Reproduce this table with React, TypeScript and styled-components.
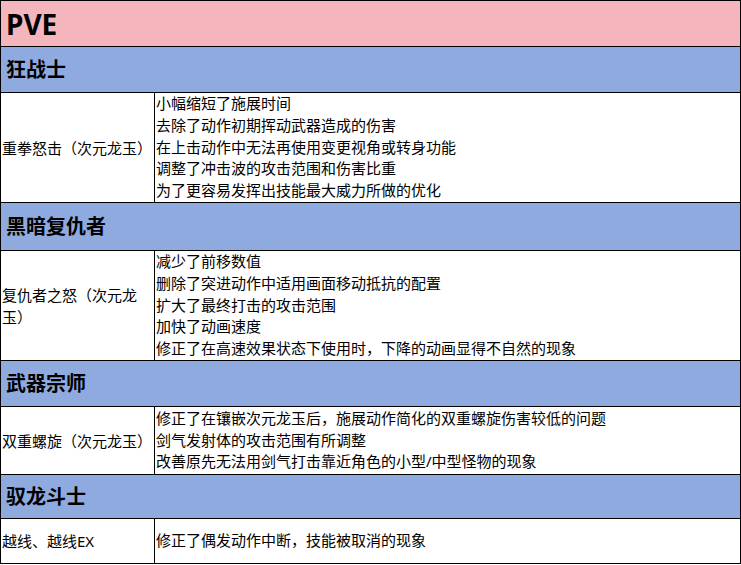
import React from 'react'
import styled, { createGlobalStyle } from 'styled-components'

const GlobalStyle = createGlobalStyle`
    html, body {
        margin: 0;
        padding: 0;
        background: #fff;
    }
    body {
        font-family: "Noto Sans", "Noto Sans CJK SC", sans-serif;
        color: #000;
    }
`

const Sheet = styled.div`
    width: 741px;
    box-sizing: border-box;
    border-top: 1px solid #000;
    border-left: 1px solid #000;
`

const Banner = styled.div<{ $h: number; $bg: string; $size: number }>`
    height: ${p => p.$h}px;
    background: ${p => p.$bg};
    border-right: 1px solid #000;
    border-bottom: 1px solid #000;
    display: flex;
    align-items: center;
    padding-left: 5px;
    font-family: "Noto Sans", "Noto Sans CJK SC", sans-serif;
    font-weight: 700;
    font-size: ${p => p.$size}px;
    line-height: 1;
`

const EntryRow = styled.div<{ $h: number }>`
    display: grid;
    grid-template-columns: 154px 1fr;
    height: ${p => p.$h}px;
    border-right: 1px solid #000;
    border-bottom: 1px solid #000;
    font-size: 15px;
`

const SkillCell = styled.div`
    border-right: 1px solid #000;
    display: flex;
    align-items: center;
    padding-left: 1px;
    line-height: 22px;
    word-break: break-all;
`

const NotesCell = styled.div`
    display: flex;
    flex-direction: column;
    justify-content: center;
    padding-left: 1px;
    line-height: 21.8px;
    white-space: nowrap;
`

interface Section {
    title: string
    headH: number
    skill: string
    rowH: number
    notes: string[]
}

const sections: Section[] = [
    {
        title: '狂战士',
        headH: 45,
        skill: '重拳怒击（次元龙玉）',
        rowH: 109,
        notes: [
            '小幅缩短了施展时间',
            '去除了动作初期挥动武器造成的伤害',
            '在上击动作中无法再使用变更视角或转身功能',
            '调整了冲击波的攻击范围和伤害比重',
            '为了更容易发挥出技能最大威力所做的优化',
        ],
    },
    {
        title: '黑暗复仇者',
        headH: 47,
        skill: '复仇者之怒（次元龙玉）',
        rowH: 109,
        notes: [
            '减少了前移数值',
            '删除了突进动作中适用画面移动抵抗的配置',
            '扩大了最终打击的攻击范围',
            '加快了动画速度',
            '修正了在高速效果状态下使用时，下降的动画显得不自然的现象',
        ],
    },
    {
        title: '武器宗师',
        headH: 45,
        skill: '双重螺旋（次元龙玉）',
        rowH: 67,
        notes: [
            '修正了在镶嵌次元龙玉后，施展动作简化的双重螺旋伤害较低的问题',
            '剑气发射体的攻击范围有所调整',
            '改善原先无法用剑气打击靠近角色的小型/中型怪物的现象',
        ],
    },
    {
        title: '驭龙斗士',
        headH: 43,
        skill: '越线、越线EX',
        rowH: 44,
        notes: ['修正了偶发动作中断，技能被取消的现象'],
    },
]

const App: React.FC = () => {
    return <>
        <GlobalStyle />
        <Sheet>
            <Banner $h={45} $bg={'#f4b6bc'} $size={28}>PVE</Banner>

            {sections.map(s => <React.Fragment key={s.title}>
                <Banner $h={s.headH} $bg={'#8eaadf'} $size={20}>{s.title}</Banner>
                <EntryRow $h={s.rowH}>
                    <SkillCell>{s.skill}</SkillCell>
                    <NotesCell>
                        {s.notes.map(n => <div key={n}>{n}</div>)}
                    </NotesCell>
                </EntryRow>
            </React.Fragment>)}
        </Sheet>
    </>
}

export default App
